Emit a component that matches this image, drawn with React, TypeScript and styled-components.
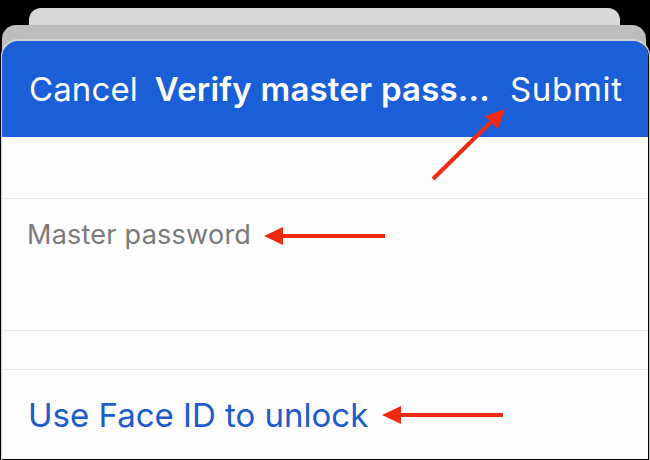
import React from "react";
import styled, { createGlobalStyle } from "styled-components";

const Global = createGlobalStyle`
  html, body { margin: 0; padding: 0; background: #000; }
  body { font-family: Inter, "Noto Sans", "Liberation Sans", sans-serif; }
`;

const Page = styled.div`
  position: relative;
  width: 650px;
  height: 460px;
  overflow: hidden;
  background: #000;
  padding-top: 8px;
  box-sizing: border-box;
  display: flex;
  flex-direction: column;
`;

const BackStrip = styled.div`
  height: 17px;
  margin: 0 30px 0 29px;
  background: #d9d9d9;
  border-radius: 12px 12px 0 0;
`;

const MidCard = styled.div`
  flex: 1;
  margin: 0 4px 0 2px;
  padding-top: 16px;
  background: #bdbdbd;
  border-radius: 14px 14px 0 0;
  display: flex;
  flex-direction: column;
`;

const Sheet = styled.div`
  flex: 1;
  margin-right: -3px;
  display: flex;
  flex-direction: column;
  border-radius: 16px 16px 0 0;
  box-shadow: 0 -1px 0 1px #d3d3d3;
  background: #fdfdfd;
  border-right: 1px solid #000;
  border-bottom: 1px solid #000;
  overflow: hidden;
`;

const Header = styled.div`
  height: 96px;
  flex: none;
  background: #1a5ed8;
  display: flex;
  align-items: center;
  padding: 0 0 0 27px;
  color: #fff;
  font-size: 33px;
  letter-spacing: 0.1px;
`;

const NavText = styled.span<{ $bold?: boolean; $gap?: number; $spacing?: number }>`
  font-weight: ${(p) => (p.$bold ? 600 : 400)};
  margin-left: ${(p) => p.$gap ?? 0}px;
  letter-spacing: ${(p) => p.$spacing ?? 0.1}px;
  white-space: nowrap;
`;

const Row = styled.div<{ $h: number }>`
  height: ${(p) => p.$h}px;
  flex: none;
  border-bottom: 1px solid #ebebeb;
  display: flex;
  align-items: center;
  padding-left: 25px;
`;

const FieldRow = styled(Row)`
  align-items: flex-start;
  padding-top: 19px;
  box-sizing: border-box;
`;

const LastRow = styled.div`
  flex: 1;
  display: flex;
  align-items: center;
  padding-left: 26px;
`;

const Placeholder = styled.span`
  font-size: 27px;
  letter-spacing: 0.25px;
  color: #7a7a7a;
`;

const LinkText = styled.span`
  font-size: 33px;
  color: #1b5bcb;
`;

const Overlay = styled.svg`
  position: absolute;
  left: 0;
  top: 0;
  pointer-events: none;
`;

const RED = "#f02a10";

export default function App() {
  return (
    <>
      <Global />
      <Page>
        <BackStrip />
        <MidCard>
          <Sheet>
            <Header>
              <NavText>Cancel</NavText>
              <NavText $bold $gap={17} $spacing={0.2}>Verify master pass...</NavText>
              <NavText $gap={20} $spacing={0.7}>Submit</NavText>
            </Header>
            <Row $h={61} />
            <FieldRow $h={132}>
              <Placeholder>Master password</Placeholder>
            </FieldRow>
            <Row $h={38} />
            <LastRow>
              <LinkText>Use Face ID to unlock</LinkText>
            </LastRow>
          </Sheet>
        </MidCard>
        <Overlay width="650" height="460" viewBox="0 0 650 460">
          <line x1="433" y1="179" x2="492" y2="121" stroke={RED} strokeWidth="4" />
          <polygon points="505,109 485,116 498,129" fill={RED} />
          <line x1="282" y1="236" x2="385" y2="236" stroke={RED} strokeWidth="4" />
          <polygon points="264,236 283,227 283,245" fill={RED} />
          <line x1="400" y1="415" x2="503" y2="415" stroke={RED} strokeWidth="4" />
          <polygon points="382,415 401,406 401,424" fill={RED} />
        </Overlay>
      </Page>
    </>
  );
}
